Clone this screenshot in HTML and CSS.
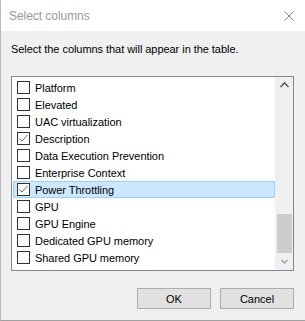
FILE: index.html
```html
<!DOCTYPE html>
<html lang="en">
<head>
  <meta charset="UTF-8">
  <title>Select columns</title>
  <link rel="stylesheet" href="styles.css">
</head>
<body>
  <div class="window">
    <div class="titlebar">
      <span class="title">Select columns</span>
      <svg class="close" width="10" height="10" viewBox="0 0 10 10">
        <path d="M0.5 0.5 L9.5 9.5 M9.5 0.5 L0.5 9.5" stroke="#8a8a8a" stroke-width="1" fill="none"/>
      </svg>
    </div>

    <div class="content">
      <p class="hint">Select the columns that will appear in the table.</p>

      <div class="listbox">
        <div class="items">
          <div class="item"><span class="box"></span>Platform</div>
          <div class="item"><span class="box"></span>Elevated</div>
          <div class="item"><span class="box"></span>UAC virtualization</div>
          <div class="item"><span class="box checked"><svg width="11" height="11" viewBox="0 0 11 11"><path d="M1.5 5.5 L4 8 L9.5 2" stroke="#6a6a6a" stroke-width="1" fill="none"/></svg></span>Description</div>
          <div class="item"><span class="box"></span>Data Execution Prevention</div>
          <div class="item"><span class="box"></span>Enterprise Context</div>
          <div class="item selected"><span class="box checked"><svg width="11" height="11" viewBox="0 0 11 11"><path d="M1.5 5.5 L4 8 L9.5 2" stroke="#6a6a6a" stroke-width="1" fill="none"/></svg></span>Power Throttling</div>
          <div class="item"><span class="box"></span>GPU</div>
          <div class="item"><span class="box"></span>GPU Engine</div>
          <div class="item"><span class="box"></span>Dedicated GPU memory</div>
          <div class="item"><span class="box"></span>Shared GPU memory</div>
        </div>
        <div class="scrollbar">
          <svg class="arrow" width="17" height="17" viewBox="0 0 17 17">
            <path d="M4.5 10 L8.5 6 L12.5 10" stroke="#606060" stroke-width="1.6" fill="none"/>
          </svg>
          <div class="track">
            <div class="thumb"></div>
          </div>
          <svg class="arrow" width="17" height="17" viewBox="0 0 17 17">
            <path d="M5.5 7 L8.5 10 L11.5 7" stroke="#a0a0a0" stroke-width="1.3" fill="none"/>
          </svg>
        </div>
      </div>

      <div class="buttons">
        <button class="btn">OK</button>
        <button class="btn">Cancel</button>
      </div>
    </div>
  </div>
</body>
</html>
```

FILE: styles.css
```css
body {
  margin: 0;
  font-family: 'Liberation Sans', Arial, sans-serif;
  font-size: 11px;
  letter-spacing: -0.05px;
  color: #000;
  background: #f0f0f0;
}

.window {
  width: 305px;
  height: 321px;
  box-sizing: border-box;
  background: #f0f0f0;
  border-bottom: 1px solid #a0a0a0;
  border-left: 1px solid #b8b8c0;
}

.titlebar {
  height: 31px;
  background: #fff;
  display: flex;
  align-items: center;
  justify-content: space-between;
  padding: 0 11px 0 8px;
}

.title {
  color: #9a9a9a;
  font-size: 12px;
}

.content {
  padding: 10px 11px 0 10px;
}

.hint {
  margin: 0;
  height: 16px;
  line-height: 16px;
}

.listbox {
  margin-top: 19px;
  height: 195px;
  box-sizing: border-box;
  border: 1px solid #828790;
  background: #fff;
  display: flex;
}

.items {
  flex: 1;
  padding: 2px 0 0 1px;
  border-right: 1px solid #eaf3fc;
}

.item {
  height: 17px;
  box-sizing: border-box;
  display: flex;
  align-items: center;
  gap: 5px;
  padding-left: 4px;
  border: 1px solid transparent;
  white-space: nowrap;
  overflow: hidden;
}

.item.selected {
  background: #cce8ff;
  border-color: #99d1ff;
}

.box {
  width: 13px;
  height: 13px;
  box-sizing: border-box;
  border: 1px solid #333;
  background: #fff;
  flex: none;
  display: flex;
  margin-left: -1px;
}

.scrollbar {
  width: 17px;
  background: #f0f0f0;
  display: flex;
  flex-direction: column;
}

.arrow {
  flex: none;
}

.track {
  flex: 1;
  display: flex;
  flex-direction: column;
  justify-content: flex-end;
  padding: 0 1px;
}

.thumb {
  height: 39px;
  background: #cdcdcd;
}

.buttons {
  display: flex;
  justify-content: flex-end;
  gap: 9px;
  margin-top: 17px;
}

.btn {
  width: 74px;
  height: 21px;
  font-family: inherit;
  font-size: 11px;
  background: #e1e1e1;
  border: 1px solid #adadad;
  color: #000;
  padding: 0;
}
```
